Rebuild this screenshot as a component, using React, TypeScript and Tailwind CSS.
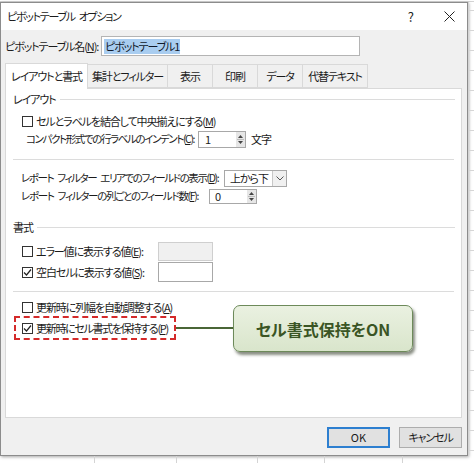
import { ReactNode } from 'react';

const font = "font-['Noto_Sans_CJK_JP','Noto_Sans',sans-serif] [font-feature-settings:'palt']";

function CheckBox({ checked = false }: { checked?: boolean }) {
  return (
    <span className="flex h-[11px] w-[11px] shrink-0 items-center justify-center border border-[#333] bg-white">
      {checked && (
        <svg width="9" height="9" viewBox="0 0 9 9">
          <path d="M1 4.5 L3.5 7 L8 1.5" fill="none" stroke="#222" strokeWidth="1.2" />
        </svg>
      )}
    </span>
  );
}

function Spinner() {
  return (
    <span className="flex h-full w-[9px] flex-col items-center justify-center gap-[1px] bg-[#e6e6e6]">
      <svg width="5" height="3" viewBox="0 0 5 3">
        <path d="M0 3 L2.5 0 L5 3Z" fill="#444" />
      </svg>
      <span className="h-px w-[7px] bg-[#bbb]" />
      <svg width="5" height="3" viewBox="0 0 5 3">
        <path d="M0 0 L2.5 3 L5 0Z" fill="#444" />
      </svg>
    </span>
  );
}

// accelerator key, underlined
function U({ children }: { children: ReactNode }) {
  return <span className="underline underline-offset-1">{children}</span>;
}

// word gap inside tightly tracked labels
function Gap() {
  return <span className="inline-block w-[4px]" />;
}

function SectionHead({ label, className }: { label: string; className: string }) {
  return (
    <div className={`flex items-start pl-[7px] pr-[6px] ${className}`}>
      <span className="leading-[14px]">{label}</span>
      <span className="ml-[4px] mt-[7px] h-px flex-1 bg-[#dcdcdc]" />
    </div>
  );
}

export default function App() {
  return (
    <div className={`relative flex h-[463px] w-[474px] flex-col overflow-hidden whitespace-nowrap bg-white text-[11px] tracking-[-1.1px] text-[#1b1b1b] ${font}`}>
      {/* sheet behind the dialog */}
      <div className="h-[2px] shrink-0 border-b border-[#d4d4d4]" />
      <div className="flex shrink-0">
        <div className="flex h-[454px] w-[468px] shrink-0 flex-col border border-[#8c8c8c] bg-[#f0f0f0] shadow-[1px_1px_3px_rgba(0,0,0,0.35)]">
          {/* title bar */}
          <div className="flex h-[27px] shrink-0 items-center bg-white pl-[6px] pr-[12px]">
            <span className="flex-1 tracking-[-1.3px]">
              ピボットテーブル<Gap />オプション
            </span>
            <span className="mr-[30px] text-[13px] tracking-normal text-[#222]">?</span>
            <svg width="11" height="11" viewBox="0 0 11 11">
              <path d="M0.5 0.5 L10.5 10.5 M10.5 0.5 L0.5 10.5" stroke="#222" strokeWidth="1" />
            </svg>
          </div>

          {/* name */}
          <div className="mt-[6px] flex h-[20px] items-center pl-[4px]">
            <span className="w-[96px]">
              ピボットテーブル名(<U>N</U>):
            </span>
            <div className="flex h-[20px] w-[259px] items-center border border-[#b4b4b4] bg-white pl-[2px]">
              <span className="bg-[#a9cdf0] px-[1px] leading-[15px] text-[#101828]">ピボットテーブル1</span>
            </div>
          </div>

          {/* tabs */}
          <div className="mt-[8px] flex h-[24px] items-end pl-[4px]">
            <div className="relative z-10 -mb-px flex h-[26px] w-[83px] items-center justify-center border border-b-0 border-[#d9d9d9] bg-white">
              レイアウトと書式
            </div>
            <div className="flex h-[24px] w-[80px] items-center justify-center border border-l-0 border-[#d9d9d9] bg-[#f0f0f0]">
              集計とフィルター
            </div>
            <div className="flex h-[24px] w-[45px] items-center justify-center border border-l-0 border-[#d9d9d9]">表示</div>
            <div className="flex h-[24px] w-[45px] items-center justify-center border border-l-0 border-[#d9d9d9]">印刷</div>
            <div className="flex h-[24px] w-[45px] items-center justify-center border border-l-0 border-[#d9d9d9]">データ</div>
            <div className="flex h-[24px] w-[65px] items-center justify-center border border-l-0 border-[#d9d9d9]">代替テキスト</div>
          </div>

          {/* tab panel */}
          <div className="ml-[4px] flex h-[330px] w-[457px] flex-col border border-[#d9d9d9] bg-white">
            <SectionHead label="レイアウト" className="h-[23px] pt-[3px]" />

            <div className="flex h-[18px] items-center gap-[3px] pl-[16px]">
              <CheckBox />
              <span>
                セルとラベルを結合して中央揃えにする(<U>M</U>)
              </span>
            </div>
            <div className="flex h-[18px] items-center pl-[20px]">
              <span className="w-[172px] text-[10.5px] tracking-[-1.4px]">
                コンパクト形式での行ラベルのインデント(<U>C</U>):
              </span>
              <div className="flex h-[17px] w-[48px] items-center justify-between border border-[#a8a8a8] pl-[6px]">
                <span>1</span>
                <Spinner />
              </div>
              <span className="ml-[5px]">文字</span>
            </div>

            <div className="flex h-[21px] items-start px-[7px] pt-[11px]">
              <span className="h-px flex-1 bg-[#dcdcdc]" />
            </div>

            <div className="flex h-[18px] items-center pl-[15px]">
              <span className="w-[203px] text-[10.5px] tracking-[-1.4px]">
                レポート<Gap />フィルター<Gap />エリアでのフィールドの表示(<U>D</U>):
              </span>
              <div className="flex h-[17px] w-[63px] items-center border border-[#a8a8a8]">
                <span className="flex-1 pl-[5px]">上から下</span>
                <span className="flex h-full w-[14px] items-center justify-center border-l border-[#c8c8c8] bg-[#f0f0f0]">
                  <svg width="8" height="5" viewBox="0 0 8 5">
                    <path d="M0.5 0.5 L4 4 L7.5 0.5" fill="none" stroke="#555" strokeWidth="1" />
                  </svg>
                </span>
              </div>
            </div>
            <div className="flex h-[18px] items-center pl-[15px]">
              <span className="w-[188px] text-[10.5px] tracking-[-1.3px]">
                レポート<Gap />フィルターの列ごとのフィールド数(<U>F</U>):
              </span>
              <div className="flex h-[15px] w-[48px] items-center justify-between border border-[#a8a8a8] pl-[5px]">
                <span>0</span>
                <Spinner />
              </div>
            </div>

            <SectionHead label="書式" className="h-[35px] pt-[15px]" />

            <div className="flex h-[22px] items-center pl-[16px]">
              <CheckBox />
              <span className="ml-[3px] w-[122px]">
                エラー値に表示する値(<U>E</U>):
              </span>
              <div className="h-[19px] w-[55px] border border-[#cfcfcf] bg-[#f0f0f0]" />
            </div>
            <div className="flex h-[20px] items-center pl-[16px]">
              <CheckBox checked />
              <span className="ml-[3px] w-[122px]">
                空白セルに表示する値(<U>S</U>):
              </span>
              <div className="h-[20px] w-[55px] border border-[#a8a8a8] bg-white" />
            </div>

            <div className="flex h-[16px] items-start px-[7px] pt-[9px]">
              <span className="h-px flex-1 bg-[#dcdcdc]" />
            </div>

            <div className="flex h-[18px] items-center gap-[3px] pl-[16px]">
              <CheckBox />
              <span>
                更新時に列幅を自動調整する(<U>A</U>)
              </span>
            </div>
            <div className="ml-[8px] flex h-[24px] w-[162px] items-center gap-[3px] border-2 border-dashed border-[#d42a2a] pl-[6px]">
              <CheckBox checked />
              <span className="tracking-[-1.3px]">
                更新時にセル書式を保持する(<U>P</U>)
              </span>
            </div>
          </div>

          {/* buttons */}
          <div className="mt-[9px] flex justify-end gap-[9px] pr-[5px]">
            <button className="flex h-[21px] w-[63px] items-center justify-center border-2 border-[#2d7fd0] bg-[#e1e1e1] tracking-normal">
              OK
            </button>
            <button className="flex h-[21px] w-[63px] items-center justify-center border border-[#adadad] bg-[#e1e1e1]">
              キャンセル
            </button>
          </div>
        </div>
        <div className="h-[454px] flex-1 border-l border-[#d4d4d4] bg-[linear-gradient(to_bottom,#d6d6d6_1px,transparent_1px)] bg-[length:100%_20px] bg-[position:0_8px]" />
      </div>
      <div className="flex flex-1">
        <div className="w-[95px] border-r border-[#d4d4d4]" />
        <div className="w-[82px] border-r border-[#d4d4d4]" />
        <div className="w-[81px] border-r border-[#d4d4d4]" />
        <div className="w-[67px] border-r border-[#d4d4d4]" />
        <div className="w-[78px] border-r border-[#d4d4d4]" />
        <div className="flex-1" />
      </div>

      {/* callout */}
      <div className="absolute left-[176px] top-[327px] h-[2px] w-[58px] bg-[#4a6636]" />
      <div className="absolute left-[233px] top-[305px] flex h-[47px] w-[180px] items-center justify-center rounded-[7px] border border-[#6d8a5a] bg-[linear-gradient(to_bottom,#eaf1e1,#d9e5cb)] shadow-[2px_3px_3px_rgba(40,50,30,0.55)]">
        <span className="text-[16px] font-bold tracking-normal text-[#3a5524]">セル書式保持をON</span>
      </div>
    </div>
  );
}
